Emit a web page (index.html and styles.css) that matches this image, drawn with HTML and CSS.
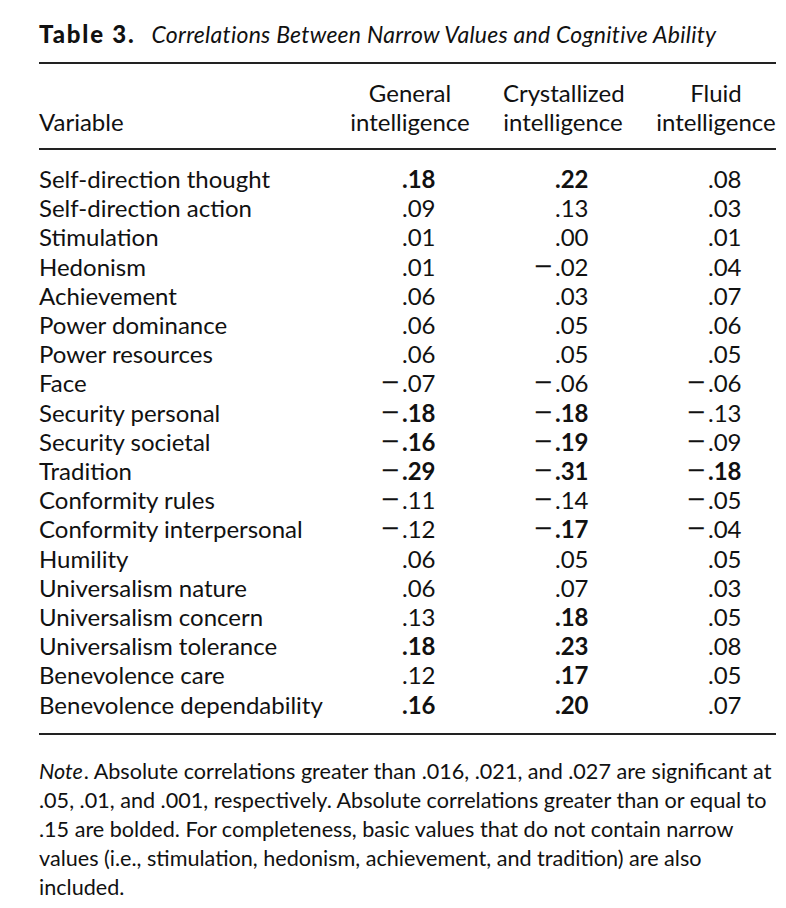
FILE: index.html
```html
<!DOCTYPE html>
<html lang="en">
<head>
<meta charset="utf-8">
<title>Table 3</title>
<link rel="stylesheet" href="styles.css">
</head>
<body>
<div class="page">
  <h1 class="caption"><span class="label">Table 3.</span><span class="title">Correlations Between Narrow Values and Cognitive Ability</span></h1>
  <div class="table">
    <div class="head">
      <div class="hvar">Variable</div>
      <div class="hcol">General<br>intelligence</div>
      <div class="hcol">Crystallized<br>intelligence</div>
      <div class="hcol">Fluid<br>intelligence</div>
    </div>
    <div class="body">
      <div class="row"><div class="var">Self-direction thought</div><div class="num b"><span class="s"></span>.18</div><div class="num b"><span class="s"></span>.22</div><div class="num"><span class="s"></span>.08</div></div>
      <div class="row"><div class="var">Self-direction action</div><div class="num"><span class="s"></span>.09</div><div class="num"><span class="s"></span>.13</div><div class="num"><span class="s"></span>.03</div></div>
      <div class="row"><div class="var">Stimulation</div><div class="num"><span class="s"></span>.01</div><div class="num"><span class="s"></span>.00</div><div class="num"><span class="s"></span>.01</div></div>
      <div class="row"><div class="var">Hedonism</div><div class="num"><span class="s"></span>.01</div><div class="num"><span class="s">−</span>.02</div><div class="num"><span class="s"></span>.04</div></div>
      <div class="row"><div class="var">Achievement</div><div class="num"><span class="s"></span>.06</div><div class="num"><span class="s"></span>.03</div><div class="num"><span class="s"></span>.07</div></div>
      <div class="row"><div class="var">Power dominance</div><div class="num"><span class="s"></span>.06</div><div class="num"><span class="s"></span>.05</div><div class="num"><span class="s"></span>.06</div></div>
      <div class="row"><div class="var">Power resources</div><div class="num"><span class="s"></span>.06</div><div class="num"><span class="s"></span>.05</div><div class="num"><span class="s"></span>.05</div></div>
      <div class="row"><div class="var">Face</div><div class="num"><span class="s">−</span>.07</div><div class="num"><span class="s">−</span>.06</div><div class="num"><span class="s">−</span>.06</div></div>
      <div class="row"><div class="var">Security personal</div><div class="num b"><span class="s">−</span>.18</div><div class="num b"><span class="s">−</span>.18</div><div class="num"><span class="s">−</span>.13</div></div>
      <div class="row"><div class="var">Security societal</div><div class="num b"><span class="s">−</span>.16</div><div class="num b"><span class="s">−</span>.19</div><div class="num"><span class="s">−</span>.09</div></div>
      <div class="row"><div class="var">Tradition</div><div class="num b"><span class="s">−</span>.29</div><div class="num b"><span class="s">−</span>.31</div><div class="num b"><span class="s">−</span>.18</div></div>
      <div class="row"><div class="var">Conformity rules</div><div class="num"><span class="s">−</span>.11</div><div class="num"><span class="s">−</span>.14</div><div class="num"><span class="s">−</span>.05</div></div>
      <div class="row"><div class="var">Conformity interpersonal</div><div class="num"><span class="s">−</span>.12</div><div class="num b"><span class="s">−</span>.17</div><div class="num"><span class="s">−</span>.04</div></div>
      <div class="row"><div class="var">Humility</div><div class="num"><span class="s"></span>.06</div><div class="num"><span class="s"></span>.05</div><div class="num"><span class="s"></span>.05</div></div>
      <div class="row"><div class="var">Universalism nature</div><div class="num"><span class="s"></span>.06</div><div class="num"><span class="s"></span>.07</div><div class="num"><span class="s"></span>.03</div></div>
      <div class="row"><div class="var">Universalism concern</div><div class="num"><span class="s"></span>.13</div><div class="num b"><span class="s"></span>.18</div><div class="num"><span class="s"></span>.05</div></div>
      <div class="row"><div class="var">Universalism tolerance</div><div class="num b"><span class="s"></span>.18</div><div class="num b"><span class="s"></span>.23</div><div class="num"><span class="s"></span>.08</div></div>
      <div class="row"><div class="var">Benevolence care</div><div class="num"><span class="s"></span>.12</div><div class="num b"><span class="s"></span>.17</div><div class="num"><span class="s"></span>.05</div></div>
      <div class="row"><div class="var">Benevolence dependability</div><div class="num b"><span class="s"></span>.16</div><div class="num b"><span class="s"></span>.20</div><div class="num"><span class="s"></span>.07</div></div>
    </div>
  </div>
  <p class="note"><em>Note</em>. Absolute correlations greater than .016, .021, and .027 are significant at<br>.05, .01, and .001, respectively. Absolute correlations greater than or equal to<br>.15 are bolded. For completeness, basic values that do not contain narrow<br>values (i.e., stimulation, hedonism, achievement, and tradition) are also<br>included.</p>
</div>
</body>
</html>
```
FILE: styles.css
```css
html, body {
  margin: 0;
  padding: 0;
  background: #ffffff;
}
body {
  font-family: "Lato", "Open Sans", sans-serif;
  color: #111111;
  font-size: 24px;
}
.page {
  width: 737px;
  padding: 19px 0 0 39px;
}
.caption {
  margin: 0;
  font-size: 23px;
  line-height: 30px;
  font-weight: normal;
  white-space: nowrap;
}
.caption .label {
  font-size: 24px;
  font-weight: 900;
  letter-spacing: 1.8px;
  margin-right: 16px;
}
.caption .title {
  font-style: italic;
  letter-spacing: 0.25px;
}
.table {
  margin-top: 13px;
  border-top: 2px solid #222222;
  border-bottom: 2px solid #222222;
}
.head {
  display: grid;
  grid-template-columns: minmax(0, 1fr) 120px 120px 120px;
  column-gap: 33px;
  padding: 14px 0 12px;
  border-bottom: 2px solid #222222;
  line-height: 29px;
}
.hvar {
  align-self: end;
}
.hcol {
  text-align: center;
  white-space: nowrap;
}
.body {
  padding: 14px 0 14px;
}
.row {
  display: grid;
  grid-template-columns: minmax(0, 1fr) 120px 120px 120px;
  column-gap: 33px;
  line-height: 29.2px;
}
.var {
  white-space: nowrap;
}
.num {
  display: grid;
  grid-template-columns: 52px auto;
}
.num .s {
  font-family: "DejaVu Sans", sans-serif;
  text-align: right;
  padding-right: 2px;
  font-weight: normal;
}
.num.b {
  font-weight: 700;
}
.note {
  margin: 22px 0 0;
  font-size: 21.6px;
  line-height: 29px;
  white-space: nowrap;
}
.note em {
  font-style: italic;
  padding-right: 1px;
}
```
